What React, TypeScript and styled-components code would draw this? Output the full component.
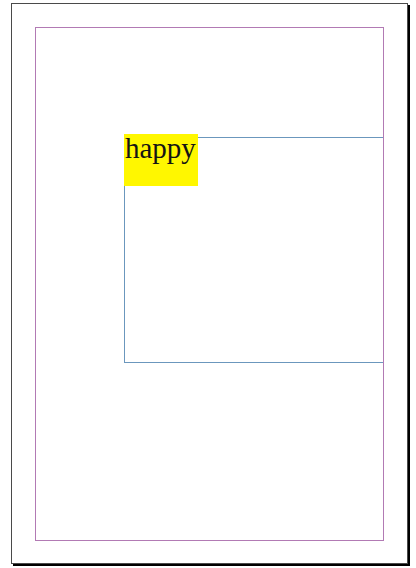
import React from "react";
import styled, { createGlobalStyle } from "styled-components";

const Global = createGlobalStyle`
  html, body { margin: 0; padding: 0; background: #ffffff; }
  body { width: 416px; height: 568px; overflow: hidden; }
`;

const Canvas = styled.div`
  width: 416px;
  height: 568px;
  box-sizing: border-box;
  padding: 3px 0 0 11px;
  background: #ffffff;
`;

const Page = styled.div`
  width: 397px;
  height: 561px;
  box-sizing: border-box;
  border: 1px solid #4a4a4a;
  box-shadow: 2px 2px 0 #000000;
  padding: 23px 0 0 23px;
  background: #ffffff;
`;

const MarginGuide = styled.div`
  width: 349px;
  height: 514px;
  box-sizing: border-box;
  border: 1px solid #b27ab4;
  padding: 109px 0 0 88px;
`;

const Frame = styled.div`
  height: 226px;
  box-sizing: border-box;
  border: 1px solid #6b97bd;
  border-right: none;
`;

const Highlight = styled.div`
  width: 74px;
  height: 52px;
  margin: -4px 0 0 -1px;
  padding-left: 1px;
  box-sizing: border-box;
  background: #fff700;
  font-family: "Liberation Serif", "Times New Roman", serif;
  font-size: 29px;
  line-height: 29px;
  color: #141414;
`;

export default function App() {
  return (
    <>
      <Global />
      <Canvas>
        <Page>
          <MarginGuide>
            <Frame>
              <Highlight>happy</Highlight>
            </Frame>
          </MarginGuide>
        </Page>
      </Canvas>
    </>
  );
}
